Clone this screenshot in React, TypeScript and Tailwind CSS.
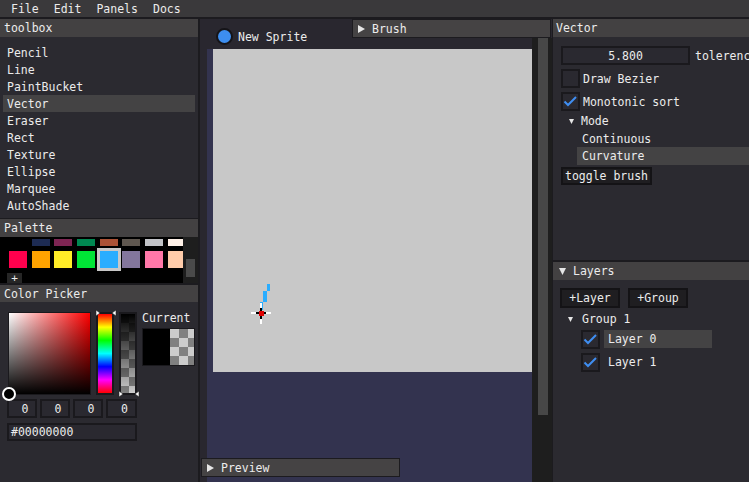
import React from "react";

const tools = ["Pencil", "Line", "PaintBucket", "Vector", "Eraser", "Rect", "Texture", "Ellipse", "Marquee", "AutoShade"];
const topRow = ["#000000", "#1d2b53", "#7e2553", "#008751", "#ab5236", "#5f574f", "#c2c3c7", "#fff1e8"];
const bottomRow = ["#ff004d", "#ffa300", "#ffec27", "#00e436", "#29adff", "#83769c", "#ff77a8", "#ffccaa"];

function TriRight() {
  return (
    <svg width="7" height="8" viewBox="0 0 7 8">
      <path d="M0 0L7 4L0 8Z" fill="#e6e6e6" />
    </svg>
  );
}

function TriDown({ size = 6 }: { size?: number }) {
  return (
    <svg width={size} height={size} viewBox="0 0 6 6">
      <path d="M0 0L6 0L3 6Z" fill="#e6e6e6" />
    </svg>
  );
}

function Check({ checked }: { checked?: boolean }) {
  return (
    <div className="w-[19px] h-[19px] shrink-0 border-2 border-[#1a191d] bg-[#2a2930] flex items-center justify-center">
      {checked && (
        <svg width="15" height="15" viewBox="0 0 15 15">
          <path d="M1.5 7.5L5 11L13 3" fill="none" stroke="#3f8ef2" strokeWidth="2" />
        </svg>
      )}
    </div>
  );
}

function Title({ children }: { children: React.ReactNode }) {
  return (
    <div className="h-[18px] shrink-0 bg-[#434142] pl-[4px] flex items-center">
      <span>{children}</span>
    </div>
  );
}

export default function App() {
  return (
    <div className="w-[749px] h-[482px] overflow-hidden bg-[#1c1b1f] text-[#ececec] text-[11.5px] leading-none font-['DejaVu_Sans_Mono',monospace] flex flex-col [&_span]:relative [&_span]:top-[1px]">
      {/* menu */}
      <div className="h-[17px] shrink-0 bg-[#3a393b] flex items-center pl-[11px] gap-[15px]">
        <span>File</span>
        <span>Edit</span>
        <span>Panels</span>
        <span>Docs</span>
      </div>
      <div className="h-[2px] shrink-0 bg-[#1c1b1f]" />

      <div className="flex h-[463px]">
        {/* left column */}
        <div className="w-[198px] shrink-0 flex flex-col">
          <Title>toolbox</Title>
          <div className="h-[181px] shrink-0 bg-[#2b2a30] pt-[7px] px-[3px]">
            {tools.map((t) => (
              <div key={t} className={"h-[17px] pl-[4px] flex items-center " + (t === "Vector" ? "bg-[#444344]" : "")}>
                <span>{t}</span>
              </div>
            ))}
          </div>
          <div className="h-[1px] shrink-0 bg-[#1c1b1f]" />
          <Title>Palette</Title>
          <div className="h-[46px] shrink-0 bg-black flex">
            <div className="w-[183px] overflow-hidden pl-[9px] pt-[2px]">
              <div className="flex gap-[4.7px] h-[7px]">
                {topRow.map((c) => (
                  <div key={c} className="w-[18px] h-[7px] shrink-0" style={{ background: c }} />
                ))}
              </div>
              <div className="flex gap-[4.7px] mt-[5px] h-[17px]">
                {bottomRow.map((c, i) => (
                  <div
                    key={c}
                    className={"w-[18px] h-[17px] shrink-0 " + (i === 4 ? "outline-3 outline-[#c8c8c8]" : "")}
                    style={{ background: c }}
                  />
                ))}
              </div>
              <div className="mt-[5px] ml-[-2px] w-[15px] h-[10px] bg-[#262626] flex justify-center items-start text-[11px] leading-[10px] overflow-hidden">
                <span>+</span>
              </div>
            </div>
            <div className="w-[15px] bg-[#1e1e1e] pt-[22px] pl-[3px]">
              <div className="w-[9px] h-[18px] bg-[#4a4a4a]" />
            </div>
          </div>
          <div className="h-[2px] shrink-0 bg-[#1c1b1f]" />
          <div className="h-[17px] shrink-0 bg-[#434142] pl-[4px] flex items-center">
            <span>Color Picker</span>
          </div>
          <div className="flex-1 bg-[#2b2a30] pt-[10px] pl-[8px] flex">
            <div className="flex flex-col">
              <div className="flex gap-[5px]">
                <div className="relative w-[83px] h-[83px] border border-[#1a191d] bg-[linear-gradient(to_bottom,transparent,#000),linear-gradient(to_right,#fff,#f00)]">
                  <div className="absolute left-[-7px] top-[74px] w-[14px] h-[14px] rounded-full border-2 border-white bg-black" />
                </div>
                <div className="relative w-[18px] h-[83px] border-2 border-[#1a191d] bg-[linear-gradient(to_bottom,#f00,#ff0,#0f0,#0ff,#00f,#f0f,#f00)]">
                  <svg className="absolute left-[-3px] top-[-5px]" width="22" height="8" viewBox="0 0 22 8">
                    <path d="M1 1L5 4L1 7Z" fill="#fff" stroke="#222" strokeWidth="0.6" />
                    <path d="M21 1L17 4L21 7Z" fill="#fff" stroke="#222" strokeWidth="0.6" />
                  </svg>
                </div>
                <div className="relative w-[18px] h-[83px] border-2 border-[#1a191d] bg-[linear-gradient(to_bottom,#000,transparent),conic-gradient(#cccccc_25%,#808080_0_50%,#cccccc_0_75%,#808080_0)] bg-[length:100%_100%,16px_18px]">
                  <svg className="absolute left-[-3px] bottom-[-5px]" width="22" height="8" viewBox="0 0 22 8">
                    <path d="M1 1L5 4L1 7Z" fill="#fff" stroke="#222" strokeWidth="0.6" />
                    <path d="M21 1L17 4L21 7Z" fill="#fff" stroke="#222" strokeWidth="0.6" />
                  </svg>
                </div>
              </div>
              <div className="flex gap-[3px] mt-[4px] ml-[-1px]">
                {[30, 30, 30, 31].map((w, i) => (
                  <div
                    key={i}
                    className="h-[19px] border-2 border-[#1a191d] bg-[#2a2930] flex items-center justify-center pl-[6px]"
                    style={{ width: w }}
                  >
                    <span>0</span>
                  </div>
                ))}
              </div>
              <div className="mt-[5px] ml-[-1px] w-[130px] h-[18px] border-2 border-[#1a191d] bg-[#2a2930] flex items-center pl-[2px]">
                <span>#00000000</span>
              </div>
            </div>
            <div className="ml-[5px] flex flex-col">
              <div className="h-[12px] flex items-center">
                <span>Current</span>
              </div>
              <div className="mt-[4px] w-[53px] h-[38px] flex border border-[#1a191d]">
                <div className="w-[28px] h-full bg-black" />
                <div className="w-[25px] h-full bg-[conic-gradient(#808080_25%,#cccccc_0_50%,#808080_0_75%,#cccccc_0)] bg-[length:18px_18px]" />
              </div>
            </div>
          </div>
        </div>

        <div className="w-[2px] shrink-0 bg-[#1c1b1f]" />

        {/* center column */}
        <div className="relative w-[352px] shrink-0 bg-[#29272f] flex">
          <div className="w-[332px] flex flex-col">
            <div className="h-[30px] shrink-0 flex items-center pt-[5px] pl-[16px]">
              <div className="w-[17px] h-[17px] rounded-full border-2 border-[#151418] bg-[#3d8ef0]" />
              <span className="ml-[5px]">New Sprite</span>
            </div>
            <div className="flex-1 flex pl-[7px]">
              <div className="w-[325px] h-full bg-[#33334f] pl-[6px]">
                <div className="relative w-[319px] h-[323px] bg-[#c8c8c8]">
                  <svg className="absolute left-0 top-0" width="319" height="323">
                    <rect x="54" y="235" width="3" height="7" fill="#29adff" />
                    <rect x="50" y="242" width="4" height="11" fill="#29adff" />
                    <rect x="47" y="253" width="3" height="8" fill="#29adff" />
                    <rect x="38" y="263" width="20" height="2" fill="#fff" />
                    <rect x="47" y="254" width="2" height="21" fill="#fff" />
                    <rect x="43" y="263" width="10" height="2" fill="#000" />
                    <rect x="47" y="259" width="2" height="11" fill="#000" />
                    <rect x="46" y="262" width="5" height="5" fill="#e00000" />
                  </svg>
                </div>
              </div>
            </div>
          </div>
          <div className="w-[20px] flex flex-col pt-[19px]">
            <div className="flex-1 bg-[#1e1e1e] pl-[6px]">
              <div className="w-[10px] h-[377px] bg-[#474747]" />
            </div>
          </div>

          <div className="absolute top-0 right-[1px] w-[199px] h-[19px] bg-[#454344] border border-[#1c1b1f] flex items-center pl-[5px]">
            <TriRight />
            <span className="ml-[7px]">Brush</span>
          </div>
          <div className="absolute left-[1px] top-[439px] w-[199px] h-[19px] bg-[#454344] border border-[#1c1b1f] flex items-center pl-[5px]">
            <TriRight />
            <span className="ml-[7px]">Preview</span>
          </div>
        </div>

        <div className="w-[1px] shrink-0 bg-[#1c1b1f]" />

        {/* right column */}
        <div className="w-[196px] shrink-0 flex flex-col overflow-hidden">
          <div className="h-[18px] shrink-0 bg-[#434142] pl-[3px] flex items-center">
            <span>Vector</span>
          </div>
          <div className="h-[223px] shrink-0 bg-[#2b2a30] pt-[9px] pl-[8px] whitespace-nowrap">
            <div className="h-[19px] flex items-center">
              <div className="w-[129px] h-[19px] shrink-0 border-2 border-[#1a191d] bg-[#2a2930] flex items-center justify-center">
                <span>5.800</span>
              </div>
              <span className="ml-[5px]">tolerence</span>
            </div>
            <div className="mt-[4px] h-[19px] flex items-center">
              <Check />
              <span className="ml-[3px]">Draw Bezier</span>
            </div>
            <div className="mt-[4px] h-[19px] flex items-center">
              <Check checked />
              <span className="ml-[3px]">Monotonic sort</span>
            </div>
            <div className="mt-[1px] h-[18px] flex items-center pl-[8px]">
              <TriDown size={5} />
              <span className="ml-[7px]">Mode</span>
            </div>
            <div className="h-[17px] flex items-center pl-[21px]">
              <span>Continuous</span>
            </div>
            <div className="h-[18px] flex items-center ml-[16px] pl-[5px] bg-[#444344]">
              <span>Curvature</span>
            </div>
            <div className="mt-[2px] w-[91px] h-[18px] border-2 border-[#141316] bg-[#1f1e21] flex items-center justify-center">
              <span>toggle brush</span>
            </div>
          </div>
          <div className="h-[2px] shrink-0 bg-[#1c1b1f]" />
          <div className="h-[18px] shrink-0 bg-[#434142] pl-[6px] flex items-center">
            <TriDown size={7} />
            <span className="ml-[7px]">Layers</span>
          </div>
          <div className="flex-1 bg-[#2b2a30] pt-[8px] pl-[7px]">
            <div className="flex gap-[8px] h-[20px]">
              <div className="w-[60px] h-[20px] border-2 border-[#141316] bg-[#1f1e21] flex items-center justify-center">
                <span>+Layer</span>
              </div>
              <div className="w-[60px] h-[20px] border-2 border-[#141316] bg-[#1f1e21] flex items-center justify-center">
                <span>+Group</span>
              </div>
            </div>
            <div className="mt-[1px] h-[20px] flex items-center pl-[8px]">
              <TriDown size={5} />
              <span className="ml-[9px]">Group 1</span>
            </div>
            <div className="h-[20px] flex items-center pl-[21px]">
              <Check checked />
              <div className="ml-[4px] w-[108px] h-[18px] bg-[#444344] flex items-center pl-[4px]">
                <span>Layer 0</span>
              </div>
            </div>
            <div className="mt-[3px] h-[20px] flex items-center pl-[21px]">
              <Check checked />
              <div className="ml-[4px] w-[108px] h-[18px] flex items-center pl-[4px]">
                <span>Layer 1</span>
              </div>
            </div>
          </div>
        </div>
      </div>
    </div>
  );
}
